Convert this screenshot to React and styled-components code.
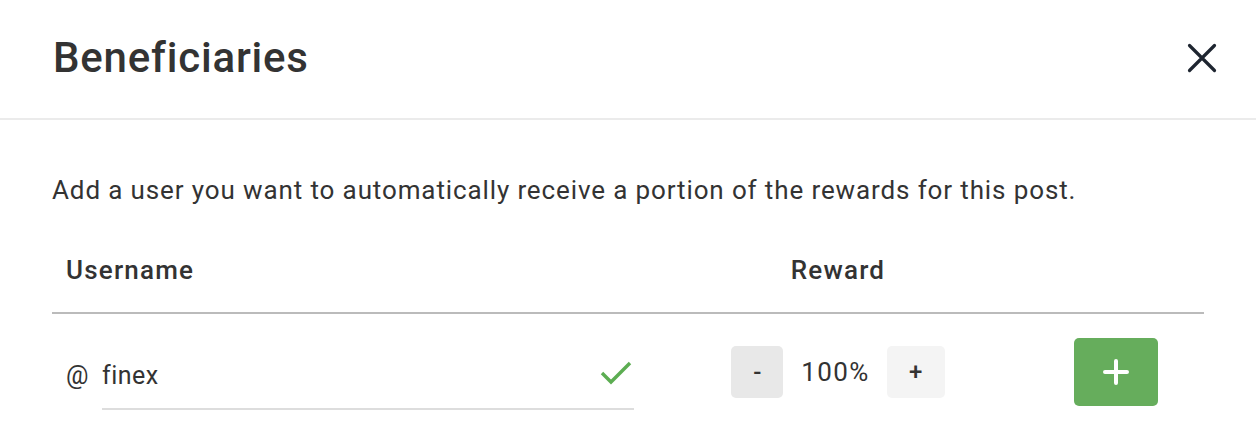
import React, {useState} from 'react';
import styled, {createGlobalStyle} from 'styled-components';

const GlobalStyle = createGlobalStyle`
  body { margin: 0; background: #fff; font-family: Roboto, "Liberation Sans", sans-serif; color: #333; }
  * { box-sizing: border-box; }
`;

const Modal = styled.div`width: 1256px; background: #fff;`;
const Header = styled.div`height: 120px; display: flex; align-items: center; justify-content: space-between; padding: 0 38px 4px 53px; border-bottom: 2px solid #ebebeb;`;
const Title = styled.h2`margin: 0; font-size: 42px; font-weight: 500; color: #333; letter-spacing: 0.8px;`;
const CloseBtn = styled.button`width: 32px; height: 32px; padding: 0; border: none; background: transparent; display: flex; align-items: center; justify-content: center; cursor: pointer; color: #1e2530; margin-top: 2px;`;
const Body = styled.div`padding: 52px 52px 0;`;
const Intro = styled.p`margin: 0 0 31px; font-size: 26px; line-height: 36px; color: #333; letter-spacing: 0.88px;`;
const Row = styled.div`display: grid; grid-template-columns: 596px 380px 176px; align-items: center; border-bottom: ${p => p.$head ? '2px solid #bbb' : 'none'}; height: ${p => p.$head ? '75px' : '116px'}; padding-bottom: ${p => p.$head ? '11px' : '0'};`;
const HeadCell = styled.div`font-size: 26px; font-weight: 500; color: #333; padding: 0 14px; letter-spacing: 1.2px; text-align: ${p => p.$center ? 'center' : 'left'};`;
const UserCell = styled.div`display: flex; align-items: center; padding: 0 14px; margin-top: 6px;`;
const At = styled.span`font-size: 25px; color: #333; width: 36px;`;
const InputWrap = styled.div`flex: 1; display: flex; align-items: center; border-bottom: 2px solid #ddd; height: 70px; padding-top: 2px;`;
const UserInput = styled.input`flex: 1; border: none; outline: none; font-family: inherit; font-size: 25px; letter-spacing: 0.5px; color: #333; padding: 0; background: transparent;`;
const Check = styled.span`display: flex; color: #5cad52; margin-right: 2px; margin-top: -4px;`;
const RewardCell = styled.div`display: flex; align-items: center; justify-content: center;`;
const StepBtn = styled.button`width: ${p => p.$wide ? '58px' : '52px'}; height: 52px; border: none; border-radius: 5px; background: ${p => p.$dark ? '#e8e8e8' : '#f4f4f4'}; font-family: inherit; font-size: 24px; font-weight: 500; color: #333; cursor: pointer; padding: 0;`;
const Percent = styled.span`font-size: 26px; font-weight: 400; color: #333; margin: 0 17px 0 18px; letter-spacing: 1.4px;`;
const AddCell = styled.div`display: flex; justify-content: center;`;
const AddBtn = styled.button`width: 84px; height: 68px; border: none; border-radius: 5px; background: #66ad5c; display: flex; align-items: center; justify-content: center; cursor: pointer; color: #fff;`;

export default function App() {
  const [name, setName] = useState('finex');
  const [pct, setPct] = useState(100);
  return (
    <Modal>
      <GlobalStyle />
      <Header>
        <Title>Beneficiaries</Title>
        <CloseBtn aria-label="Close">
          <svg width="30" height="30" viewBox="0 0 30 30">
            <path d="M2.5 2.5 L27.5 27.5 M27.5 2.5 L2.5 27.5" stroke="currentColor" strokeWidth="3.2" strokeLinecap="round" />
          </svg>
        </CloseBtn>
      </Header>
      <Body>
        <Intro>Add a user you want to automatically receive a portion of the rewards for this post.</Intro>
        <Row $head>
          <HeadCell>Username</HeadCell>
          <HeadCell $center>Reward</HeadCell>
          <HeadCell />
        </Row>
        <Row>
          <UserCell>
            <At>@</At>
            <InputWrap>
              <UserInput value={name} onChange={e => setName(e.target.value)} />
              <Check>
                <svg width="32" height="24" viewBox="0 0 32 24">
                  <path d="M2 12 L11 21 L30 2" fill="none" stroke="currentColor" strokeWidth="3.4" />
                </svg>
              </Check>
            </InputWrap>
          </UserCell>
          <RewardCell>
            <StepBtn $dark onClick={() => setPct(Math.max(0, pct - 1))}>-</StepBtn>
            <Percent>{pct}%</Percent>
            <StepBtn $wide onClick={() => setPct(Math.min(100, pct + 1))}>+</StepBtn>
          </RewardCell>
          <AddCell>
            <AddBtn aria-label="Add">
              <svg width="26" height="26" viewBox="0 0 26 26">
                <path d="M13 2 V24 M2 13 H24" stroke="currentColor" strokeWidth="4" strokeLinecap="round" />
              </svg>
            </AddBtn>
          </AddCell>
        </Row>
      </Body>
    </Modal>
  );
}
